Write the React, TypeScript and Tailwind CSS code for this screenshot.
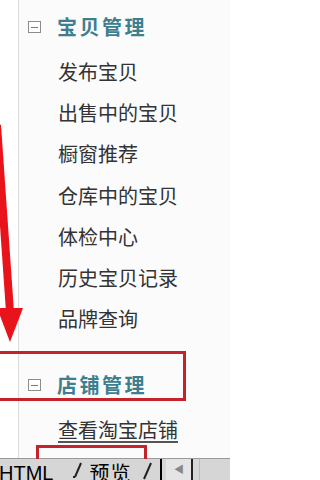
import React from "react";

const items = ["发布宝贝", "出售中的宝贝", "橱窗推荐", "仓库中的宝贝", "体检中心", "历史宝贝记录", "品牌查询"];

function CollapseIcon() {
  return (
    <span className="flex h-[12px] w-[13px] items-center justify-center border border-[#8c8c8c] bg-white">
      <span className="h-px w-[7px] bg-[#7a7a7a]" />
    </span>
  );
}

function GroupHeader({ label }: { label: string }) {
  return (
    <div className="flex h-[40px] items-center gap-[16px] pl-[9px]">
      <CollapseIcon />
      <span className="text-[20px] font-bold tracking-[2.5px] text-[#3d7f8f]">{label}</span>
    </div>
  );
}

export default function App() {
  return (
    <div
      className="relative flex h-[480px] w-[230px] flex-col overflow-hidden bg-white text-[#333]"
      style={{ fontFamily: '"Noto Sans CJK SC", "Liberation Sans", sans-serif' }}
    >
      {/* Sidebar */}
      <div className="flex h-[458px]">
        <div className="w-[19px] border-r border-[#dcdcdc] bg-white" />
        <div className="flex-1 bg-[#fbfbfb] pt-[7px]">
          <GroupHeader label="宝贝管理" />
          <div className="mt-[4px] flex flex-col">
            {items.map((t) => (
              <div key={t} className="flex h-[41.3px] items-center pl-[39px] text-[20px] leading-none">
                {t}
              </div>
            ))}
          </div>
          <div className="mt-[25px]">
            <GroupHeader label="店铺管理" />
          </div>
          <div className="mt-[4px] flex h-[41px] items-center pl-[39px] text-[20px] leading-none">
            <span className="underline decoration-[#555] underline-offset-[3px]">查看淘宝店铺</span>
          </div>
        </div>
      </div>

      {/* Bottom tab bar */}
      <div className="flex h-[22px] items-center border-t border-[#9a9a9a] bg-[#d6d6d6] text-[20px] leading-none text-black" style={{ fontFamily: '"Liberation Sans", "Noto Sans CJK SC", sans-serif' }}>
        <span className="-ml-[1px] pt-[6px]">HTML</span>
        <svg width="20" height="22" viewBox="0 0 20 22" className="ml-[16px]">
          <path d="M12 4 L6 18 M6 18 L4 18" stroke="#222" strokeWidth="2" fill="none" />
        </svg>
        <span className="pt-[6px] tracking-[1px]" style={{ fontFamily: '"Noto Sans CJK SC", sans-serif' }}>预览</span>
        <svg width="20" height="22" viewBox="0 0 20 22" className="ml-[8px]">
          <path d="M12 4 L5 20" stroke="#222" strokeWidth="2" fill="none" />
        </svg>
        <div className="ml-[1px] h-full w-[2px] bg-black" />
        <div className="ml-[4px] flex h-full w-[25px] items-center justify-center bg-[#e4e4e4]">
          <span className="text-[10px] text-[#888]">◀</span>
        </div>
        <div className="h-full w-[2px] bg-[#222]" />
        <div className="ml-[6px] h-full w-px bg-[#bbb]" />
      </div>

      {/* Red annotations */}
      <svg className="pointer-events-none absolute left-0 top-0" width="230" height="480" viewBox="0 0 230 480">
        <path d="M-3 125 L10 312" stroke="#e8131b" strokeWidth="8" fill="none" />
        <polygon points="-3,308 23,308 10,342" fill="#e8131b" />
      </svg>
      <div className="pointer-events-none absolute left-[-4px] top-[351px] h-[50px] w-[190px] border-[3px] border-[#c4232c]" />
      <div className="pointer-events-none absolute left-[36px] top-[445px] h-[14px] w-[111px] border-x-[3px] border-t-[3px] border-[#c4232c]" />
    </div>
  );
}
